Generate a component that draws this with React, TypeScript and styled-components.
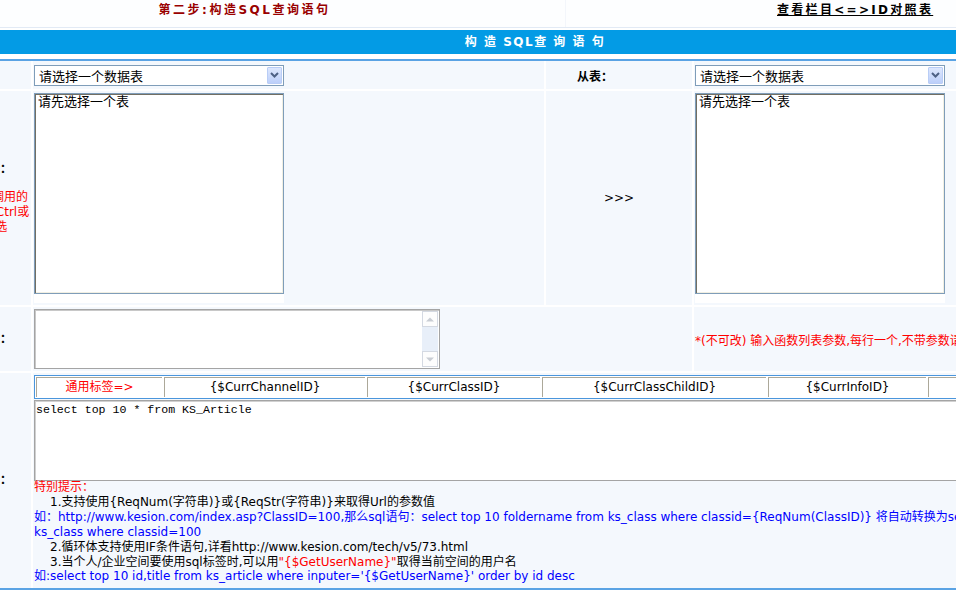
import React from "react";
import styled, { createGlobalStyle } from "styled-components";

const GlobalStyle = createGlobalStyle`
  html, body { margin: 0; padding: 0; background: #ffffff; overflow: hidden; }
  body {
    font-family: "DejaVu Sans", "Noto Sans CJK SC", sans-serif;
    font-size: 12px;
    color: #000;
  }
`;

/* the page is wider than the window and scrolled horizontally by 90px */
const Page = styled.div`
  width: 1250px;
  margin-left: -90px;
`;

const TopBar = styled.div`
  display: grid;
  grid-template-columns: 655px 1fr;
  column-gap: 1px;
  height: 27px;
  background: #f3f6fb;
  border-bottom: 1px solid #e2eaf5;
  margin-bottom: 2px;
`;

const TopCell = styled.div<{ $pad: string; $align: string }>`
  background: #fdfeff;
  padding: ${(p) => p.$pad};
  text-align: ${(p) => p.$align};
  line-height: 14px;
  font-weight: bold;
  white-space: nowrap;
`;

const StepTitle = styled.span`
  color: #990000;
  letter-spacing: 2.5px;
`;

const HeaderLink = styled.a`
  color: #000;
  text-decoration: underline;
  letter-spacing: 2.3px;
`;

const HeaderBar = styled.div`
  height: 24px;
  line-height: 24px;
  background: #039be5;
  color: #fff;
  font-weight: bold;
  text-align: center;
  letter-spacing: 1.5px;
  white-space: pre;
`;

const FormGrid = styled.div`
  margin-top: 5px;
  border-top: 2px solid #5aa3e4;
  border-bottom: 2px solid #5aa3e4;
  display: grid;
  grid-template-columns: 121px 511px 146px 1fr;
  grid-template-rows: 28px 214px 64px 215px;
  gap: 2px;
  background: #ffffff;
`;

const Cell = styled.div<{ $span?: string; $align?: string; $justify?: string; $pad?: string }>`
  background: #f4f8fd;
  grid-column: ${(p) => p.$span || "auto"};
  display: flex;
  align-items: ${(p) => p.$align || "center"};
  justify-content: ${(p) => p.$justify || "flex-start"};
  padding: ${(p) => p.$pad || "0"};
  min-width: 0;
  overflow: hidden;
`;

const LabelCell = styled.div`
  background: #f4f8fd;
  display: flex;
  flex-direction: column;
  justify-content: center;
  overflow: hidden;
  white-space: nowrap;
`;

const LabelTitle = styled.div`
  font-weight: bold;
  text-align: right;
  padding-right: 19px;
  line-height: 15px;
`;

const LabelHint = styled.div`
  color: #ff0000;
  padding-left: 34px;
  margin-top: 13px;
  line-height: 15px;
`;

const BoldText = styled.span`
  font-weight: bold;
  white-space: nowrap;
`;

const SelectBox = styled.div`
  width: 250px;
  height: 21px;
  box-sizing: border-box;
  border: 1px solid #7f9db9;
  background: #fff;
  display: flex;
  align-items: center;
  justify-content: space-between;
  padding: 0 1px 0 4px;
  font-size: 13px;
`;

const SelectArrow = styled.span`
  width: 15px;
  height: 17px;
  box-sizing: border-box;
  border: 1px solid #b9cdf6;
  border-radius: 1px;
  background: linear-gradient(#dde7fd, #bccffa);
  display: flex;
  align-items: center;
  justify-content: center;
`;

const ListWrap = styled.div`
  width: 250px;
  height: 210px;
  background: #fff;
`;

const ListBox = styled.div`
  height: 201px;
  box-sizing: border-box;
  border: 1px solid #7f9db9;
  box-shadow: inset 1px 1px 0 #716f64, inset -1px -1px 0 #f1efe2;
  background: #fff;
  padding: 0 3px;
  font-size: 13px;
  line-height: 15px;
`;

const Arrows = styled.span`
  letter-spacing: 0;
`;

const FuncBox = styled.div`
  width: 406px;
  height: 60px;
  box-sizing: border-box;
  border: 1px solid #a4a4a4;
  box-shadow: inset 1px 1px 0 #c8c8c8;
  background: #fff;
  display: flex;
  justify-content: flex-end;
  padding: 1px 1px 1px 0;
`;

const ScrollBar = styled.div`
  width: 16px;
  display: flex;
  flex-direction: column;
  justify-content: space-between;
  background: #e8eff9;
`;

const ScrollBtn = styled.div`
  height: 16px;
  box-sizing: border-box;
  border: 1px solid #d4d9e2;
  background: #fdfdfd;
  display: flex;
  align-items: center;
  justify-content: center;
`;

const RedNote = styled.span`
  color: #ff0000;
  white-space: nowrap;
`;

const SqlArea = styled.div`
  display: flex;
  flex-direction: column;
  align-items: flex-start;
  width: 100%;
`;

const TagTable = styled.div`
  display: flex;
  gap: 2px;
  border: 1px solid #4b96dc;
  padding: 1px;
  background: #fff;
`;

const TagCell = styled.div<{ $w: number; $red?: boolean }>`
  width: ${(p) => p.$w}px;
  height: 20px;
  box-sizing: border-box;
  border-top: 1px solid #aca899;
  border-left: 1px solid #aca899;
  background: #fff;
  color: ${(p) => (p.$red ? "#ff0000" : "#000")};
  text-align: center;
  line-height: 19px;
  white-space: nowrap;
  overflow: hidden;
  flex: none;
`;

const SqlBox = styled.div`
  margin-top: 1px;
  width: 1110px;
  height: 81px;
  box-sizing: border-box;
  border: 1px solid #a4a4a4;
  box-shadow: inset 1px 1px 0 #d0d0d0;
  background: #fff;
  padding: 2px 1px;
  font-family: "Liberation Mono", monospace;
  font-size: 11.6px;
  line-height: 14px;
  white-space: pre;
`;

const Notes = styled.div`
  margin-top: -1px;
  line-height: 14.9px;
  white-space: nowrap;
`;

const NoteLine = styled.div<{ $indent?: boolean; $tone?: "red" | "blue" | "black" }>`
  padding-left: ${(p) => (p.$indent ? "16px" : "0")};
  color: ${(p) => (p.$tone === "red" ? "#ff0000" : p.$tone === "blue" ? "#0000ff" : "#000")};
`;

const Red = styled.span`
  color: #ff0000;
`;

const Chevron = () => (
  <svg width="9" height="6" viewBox="0 0 9 6">
    <path d="M1 1 L4.5 4.5 L8 1" fill="none" stroke="#4d6185" strokeWidth="2" />
  </svg>
);

const Tri = ({ up }: { up: boolean }) => (
  <svg width="8" height="5" viewBox="0 0 8 5">
    <path d={up ? "M0 4.5 L4 0.5 L8 4.5 Z" : "M0 0.5 L8 0.5 L4 4.5 Z"} fill="#c9cdd4" />
  </svg>
);

const Select = ({ text }: { text: string }) => (
  <SelectBox>
    <span>{text}</span>
    <SelectArrow>
      <Chevron />
    </SelectArrow>
  </SelectBox>
);

const tags: { w: number; t: string; red?: boolean }[] = [
  { w: 126, t: "通用标签=>", red: true },
  { w: 201, t: "{$CurrChannelID}" },
  { w: 173, t: "{$CurrClassID}" },
  { w: 224, t: "{$CurrClassChildID}" },
  { w: 158, t: "{$CurrInfoID}" },
  { w: 160, t: "{$CurrSpecialID}" },
];

export default function App() {
  return (
    <>
      <GlobalStyle />
      <Page>
        <TopBar>
          <TopCell $pad="3px 0 0 14px" $align="center">
            <StepTitle>第二步:构造SQL查询语句</StepTitle>
          </TopCell>
          <TopCell $pad="3px 0 0 211px" $align="left">
            <HeaderLink href="#">查看栏目&lt;=&gt;ID对照表</HeaderLink>
          </TopCell>
        </TopBar>

        <HeaderBar>构 造 SQL查 询 语 句</HeaderBar>

        <FormGrid>
          {/* row 1 */}
          <LabelCell />
          <Cell $pad="0 0 0 1px">
            <Select text="请选择一个数据表" />
          </Cell>
          <Cell $pad="0 0 0 31px">
            <BoldText>从表：</BoldText>
          </Cell>
          <Cell $pad="0 0 0 1px">
            <Select text="请选择一个数据表" />
          </Cell>

          {/* row 2 */}
          <LabelCell>
            <LabelTitle>选择字段：</LabelTitle>
            <LabelHint>
              请选择要调用的
              <br />
              字段,可按Ctrl或
              <br />
              Shift键多选
            </LabelHint>
          </LabelCell>
          <Cell $align="flex-start" $pad="2px 0 0 1px">
            <ListWrap>
              <ListBox>请先选择一个表</ListBox>
            </ListWrap>
          </Cell>
          <Cell $justify="center">
            <Arrows>&gt;&gt;&gt;</Arrows>
          </Cell>
          <Cell $align="flex-start" $pad="2px 0 0 1px">
            <ListWrap>
              <ListBox>请先选择一个表</ListBox>
            </ListWrap>
          </Cell>

          {/* row 3 */}
          <LabelCell>
            <LabelTitle>函数参数：</LabelTitle>
          </LabelCell>
          <Cell $span="span 2" $align="flex-start" $pad="2px 0 0 1px">
            <FuncBox>
              <ScrollBar>
                <ScrollBtn>
                  <Tri up />
                </ScrollBtn>
                <ScrollBtn>
                  <Tri up={false} />
                </ScrollBtn>
              </ScrollBar>
            </FuncBox>
          </Cell>
          <Cell $pad="0 0 0 1px">
            <RedNote>*(不可改) 输入函数列表参数,每行一个,不带参数请留空</RedNote>
          </Cell>

          {/* row 4 */}
          <LabelCell>
            <LabelTitle>SQL语句：</LabelTitle>
          </LabelCell>
          <Cell $span="span 3" $align="flex-start" $pad="2px 0 0 1px">
            <SqlArea>
              <TagTable>
                {tags.map((tg) => (
                  <TagCell key={tg.t} $w={tg.w} $red={tg.red}>
                    {tg.t}
                  </TagCell>
                ))}
              </TagTable>
              <SqlBox>select top 10 * from KS_Article</SqlBox>
              <Notes>
                <NoteLine $tone="red">特别提示：</NoteLine>
                <NoteLine $indent>1.支持使用{"{ReqNum(字符串)}"}或{"{ReqStr(字符串)}"}来取得Url的参数值</NoteLine>
                <NoteLine $tone="blue">
                  如：http://www.kesion.com/index.asp?ClassID=100,那么sql语句：select top 10 foldername from ks_class
                  where classid={"{ReqNum(ClassID)}"} 将自动转换为select top 10 foldername from
                </NoteLine>
                <NoteLine $tone="blue">ks_class where classid=100</NoteLine>
                <NoteLine $indent>2.循环体支持使用IF条件语句,详看http://www.kesion.com/tech/v5/73.html</NoteLine>
                <NoteLine $indent>
                  3.当个人/企业空间要使用sql标签时,可以用<Red>"{"{$GetUserName}"}"</Red>取得当前空间的用户名
                </NoteLine>
                <NoteLine $tone="blue">
                  如:select top 10 id,title from ks_article where inputer='{"{$GetUserName}"}' order by id desc
                </NoteLine>
              </Notes>
            </SqlArea>
          </Cell>
        </FormGrid>
      </Page>
    </>
  );
}
